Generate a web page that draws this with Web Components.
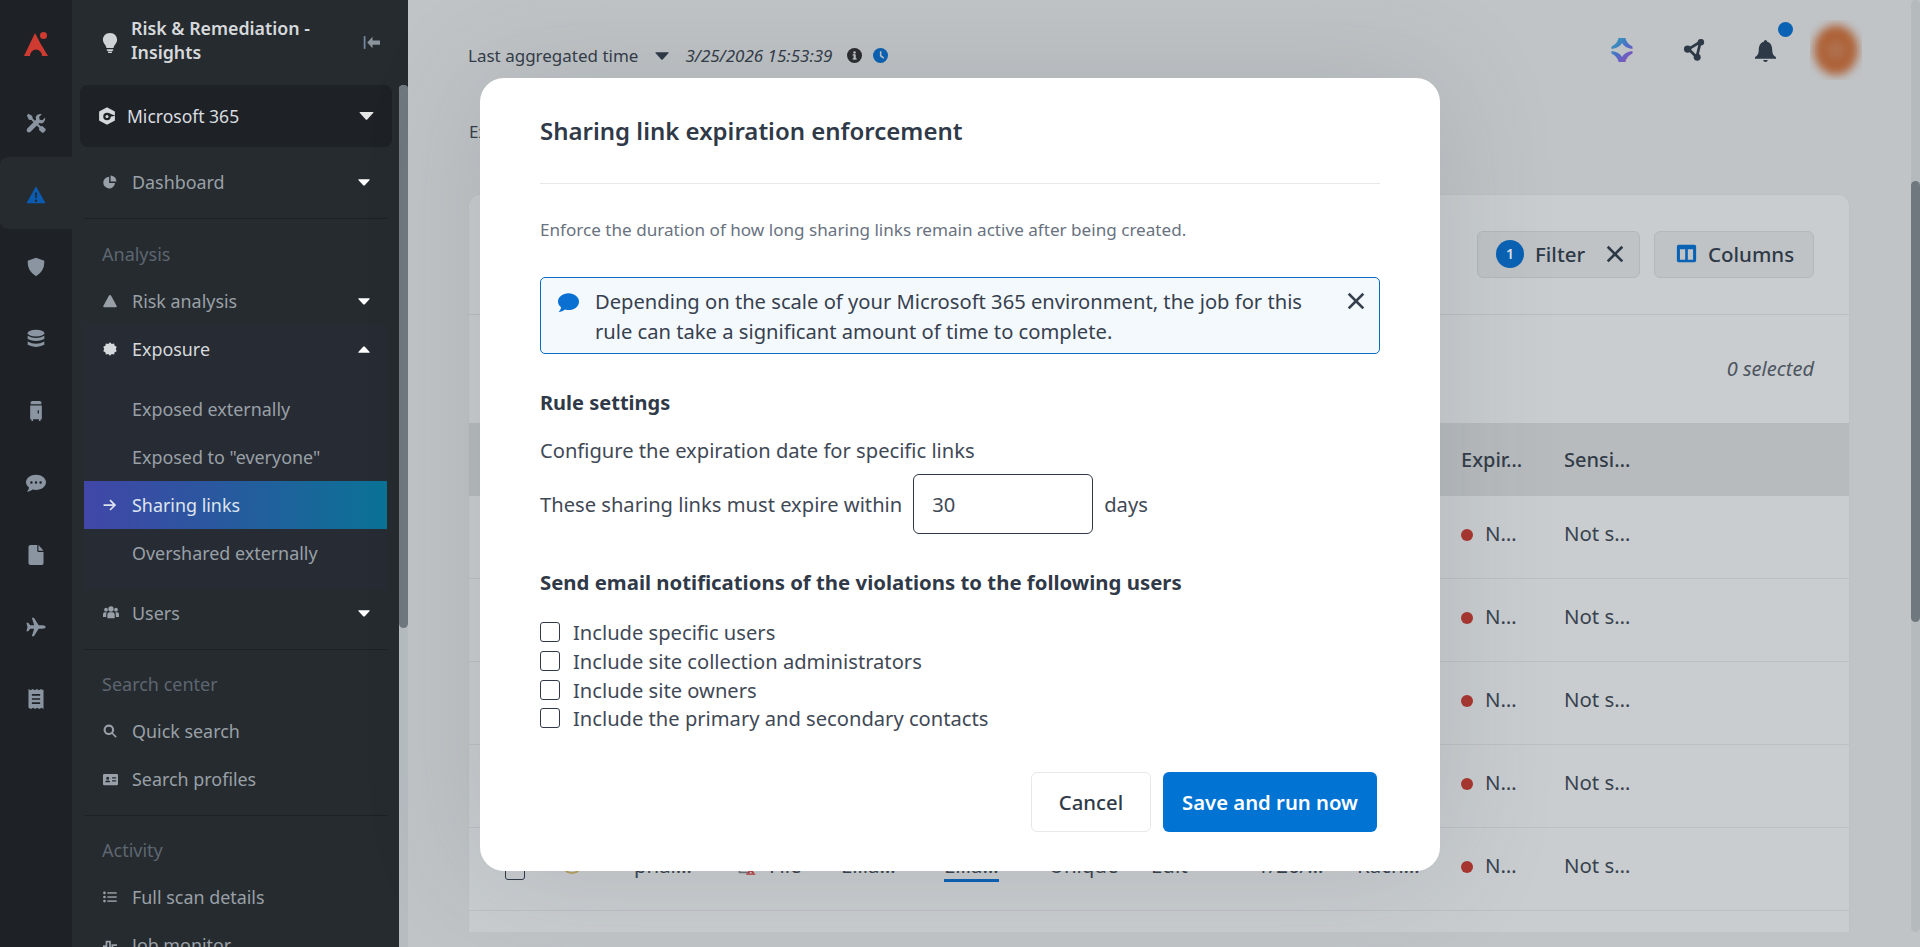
<!DOCTYPE html>
<html>
<head>
<meta charset="utf-8">
<title>Sharing links</title>
<style>
  html, body { margin: 0; height: 947px; overflow: hidden; background: #c0c4c7; }
  body { font-family: "Noto Sans", sans-serif; }
</style>
</head>
<body>
<risk-app></risk-app>

<script>
"use strict";

const ICONS = {
  logo: '<path fill="#cf3a31" d="M11 1 L16.500 11.500 L24 24 H18 A6 6.500 0 0 0 6 24 H0 Z"/><circle cx="19.500" cy="3.500" r="3.500" fill="#cf3a31"/>',
  tools: '<path d="M3 1 L1 3 L3.500 8 L6.500 8.500 L16 18 L15.500 20 L19 23.500 Q20.500 24 21.500 23 L23.500 21 Q24 20 23.300 19 L19.500 15.500 L17.500 16 L8 6.500 L7.500 3.500 Z"/><path d="M23 5.500 L19.700 8.800 L16.500 8 L15.700 4.800 L19 1.500 Q15 .3 12.700 3 Q11 5 12 8 L1.500 18.500 Q0 20.500 1.500 22.500 Q3.500 24 5.500 22.500 L16 12 Q19 13 21 11.300 Q23.700 9 23 5.500 Z"/>',
  warning: '<path fill-rule="evenodd" d="M12 1.500 L23.500 22 H.5 Z M10.800 9 L11.200 16 H12.800 L13.200 9 Z M12 17.300 A1.500 1.500 0 1 0 12 20.300 A1.500 1.500 0 1 0 12 17.300 Z"/>',
  shield: '<path d="M12 1 L22 4.500 Q22.500 17 12 23 Q1.500 17 2 4.500 Z"/>',
  db: '<ellipse cx="12" cy="5" rx="10" ry="4"/><path d="M2 8 Q12 13.500 22 8 V12 Q12 17 2 12 Z"/><path d="M2 15 Q12 20.500 22 15 V19 Q12 24 2 19 Z"/>',
  door: '<path d="M7.500 0 H16.500 Q18.500 0 18.500 2 V4 H5.500 V2 Q5.500 0 7.500 0 Z"/><path fill-rule="evenodd" d="M5 5.500 H19 V22 H17.500 V24 H15.500 V22 H8.500 V24 H6.500 V22 H5 Z M14 11 V15 H15.500 V11 Z"/>',
  chat: '<path fill-rule="evenodd" d="M12 2 C18.600 2 24 6 24 11.200 C24 16.400 18.600 20.400 12 20.400 C10.500 20.400 9 20.200 7.700 19.800 C6 21.300 3.500 22.500 1 22.500 C2.500 21 3.500 19 3.600 17.400 C1.400 15.800 0 13.700 0 11.200 C0 6 5.400 2 12 2 Z M6.500 9.800 A1.500 1.500 0 1 0 6.500 12.800 A1.500 1.500 0 1 0 6.500 9.800 Z M12 9.800 A1.500 1.500 0 1 0 12 12.800 A1.500 1.500 0 1 0 12 9.800 Z M17.500 9.800 A1.500 1.500 0 1 0 17.500 12.800 A1.500 1.500 0 1 0 17.500 9.800 Z"/>',
  file: '<path d="M5.500 0 H13.500 V7 Q13.500 8.500 15 8.500 H21 V22 Q21 24 19 24 H5.500 Q3 24 3 22 V2 Q3 0 5.500 0 Z"/><path d="M15 0 L21 6.800 H15 Z"/>',
  plane: '<path d="M23.500 12 Q23.500 10 19.500 10 H15.200 L9.500 1 H7 L9.800 10 H5 L2.700 7 H.5 L1.800 12 L.5 17 H2.700 L5 14 H9.800 L7 23 H9.500 L15.200 14 H19.500 Q23.500 14 23.500 12 Z"/>',
  receipt: '<path fill-rule="evenodd" d="M3 0 L5.500 1.500 L8 0 L10.500 1.500 L13 0 L15.500 1.500 L18 0 L20.500 1.500 L21 0 V24 L18.500 22.500 L16 24 L13.500 22.500 L11 24 L8.500 22.500 L6 24 L3 22.500 Z M7 6 V8 H17 V6 Z M7 11 V13 H17 V11 Z M7 16 V18 H17 V16 Z"/>',
  bulb: '<path d="M12 0 C6.500 0 3.500 4 3.500 8.200 C3.500 12.500 7 14 7.800 18 H16.200 C17 14 20.500 12.500 20.500 8.200 C20.500 4 17.500 0 12 0 Z"/><rect x="8" y="19.500" width="8" height="2" rx="1"/><rect x="9.500" y="22.300" width="5" height="1.700" rx=".8"/>',
  collapse: '<rect x="1" y="3" width="2.500" height="18" fill="#7587a0"/><path fill="#8b949c" d="M6 12 L13.500 4 V9 H24 V15 H13.500 V20 Z"/>',
  hex: '<path stroke="currentColor" stroke-width="2" stroke-linejoin="round" d="M12 1.500 L21.500 6.500 V17.500 L12 22.500 L2.500 17.500 V6.500 Z"/><circle cx="12" cy="12.500" r="5" fill="#1e2226"/><circle cx="12" cy="12.500" r="2" fill="currentColor"/><path d="M14 8 L23 11.500 L16.500 13 Z" fill="#1e2226"/>',
  pie: '<path d="M10.500 3 A10 10 0 1 0 20.500 13.500 H10.500 Z"/><path d="M13 1 A10 10 0 0 1 23 11 H13 Z"/>',
  tri: '<path d="M12 1.500 Q13 1.500 14 3 L23.500 20.500 Q24 22.500 22 22.500 H2 Q0 22.500 .5 20.500 L10 3 Q11 1.500 12 1.500 Z"/>',
  burst: '<path d="M12 .5 L15 3.500 L19 2.500 L20 6.500 L23.500 8 L22 12 L23.500 16 L20 17.500 L19 21.500 L15 20.500 L12 23.500 L9 20.500 L5 21.500 L4 17.500 L.5 16 L2 12 L.5 8 L4 6.500 L5 2.500 L9 3.500 Z"/>',
  arrow: '<path d="M1 10.500 H17 L11 4.500 L13 2.500 L22.500 12 L13 21.500 L11 19.500 L17 13.500 H1 Z"/>',
  users: '<circle cx="12" cy="6" r="4"/><circle cx="4.500" cy="7" r="2.800"/><circle cx="19.500" cy="7" r="2.800"/><path d="M6.500 20 V15 Q6.500 11 10 11 H14 Q17.500 11 17.500 15 V20 Z"/><path d="M0 18 V14 Q0 11 3 11 H5.500 Q4.800 12.500 4.800 15 V18 Z"/><path d="M24 18 V14 Q24 11 21 11 H18.500 Q19.200 12.500 19.200 15 V18 Z"/>',
  search: '<path fill-rule="evenodd" d="M10 1 A9 9 0 0 1 17.200 15.400 L23.500 21.600 L21.500 23.600 L15.300 17.300 A9 9 0 1 1 10 1 Z M10 4.500 A5.500 5.500 0 1 0 10 15.500 A5.500 5.500 0 1 0 10 4.500 Z"/>',
  idcard: '<path fill-rule="evenodd" d="M2 3 H22 Q24 3 24 5 V19 Q24 21 22 21 H2 Q0 21 0 19 V5 Q0 3 2 3 Z M7.500 7.500 A2.500 2.500 0 1 0 7.500 12.500 A2.500 2.500 0 1 0 7.500 7.500 Z M3.500 16.500 H11.500 Q11.500 13.500 9 13.500 H6 Q3.500 13.500 3.500 16.500 Z M14.500 8.500 V10.500 H21 V8.500 Z M14.500 13 V15 H21 V13 Z"/>',
  list: '<circle cx="2.500" cy="5" r="2.300"/><circle cx="2.500" cy="12" r="2.300"/><circle cx="2.500" cy="19" r="2.300"/><rect x="7.500" y="3.800" width="16" height="2.500"/><rect x="7.500" y="10.800" width="16" height="2.500"/><rect x="7.500" y="17.800" width="16" height="2.500"/>',
  pulse: '<path d="M0 14 H6 V6 H12 V18 H16 V12 H24" fill="none" stroke="currentColor" stroke-width="3"/>',
  info: '<circle cx="12" cy="12" r="12"/><rect x="10.500" y="10.500" width="3.500" height="7.500" fill="#c0c4c7"/><rect x="9" y="16.500" width="6.500" height="2" fill="#c0c4c7"/><rect x="9" y="10" width="4" height="2" fill="#c0c4c7"/><circle cx="12" cy="7" r="2" fill="#c0c4c7"/>',
  clock: '<circle cx="12" cy="12" r="12"/><path d="M11 5 H13.500 V11.500 L18 15 L16.500 17 L11 13 Z" fill="#c0c4c7"/>',
  net: '<path d="M6 11 L19 3 L15 20 Z" fill="none" stroke="currentColor" stroke-width="3"/><circle cx="5" cy="11" r="4"/><circle cx="19.500" cy="3.500" r="3.500"/><circle cx="15.500" cy="20" r="3.800"/>',
  bell: '<path d="M12 1 Q13.500 1 13.800 2.800 C18 4 19 8 19 11 C19 15.500 20.500 17.500 23 19 V20.500 H1 V19 C3.500 17.500 5 15.500 5 11 C5 8 6 4 10.200 2.800 Q10.500 1 12 1 Z"/><path d="M9.500 22 H14.500 Q14 24 12 24 Q10 24 9.500 22 Z"/>',
  spark: '<defs><linearGradient id="sg" gradientUnits="userSpaceOnUse" x1="0" y1="0" x2="24" y2="24"><stop offset="0" stop-color="#2aa8b4"/><stop offset=".5" stop-color="#4a6fc8"/><stop offset="1" stop-color="#a244b4"/></linearGradient></defs><path fill="url(#sg)" d="M8.500 0 H15.500 Q16 5 22.500 8.500 V11 Q14.500 10 12 5 Q9.500 10 1.500 11 V8.500 Q8 5 8.500 0 Z"/><path fill="url(#sg)" d="M8.500 24 H15.500 Q16 19 22.500 15.500 V13 Q14.500 14 12 19 Q9.500 14 1.500 13 V15.500 Q8 19 8.500 24 Z"/>',
  columns: '<path fill-rule="evenodd" d="M3 2 H21 Q23 2 23 4 V20 Q23 22 21 22 H3 Q1 22 1 20 V4 Q1 2 3 2 Z M4.500 7 V19 H10.500 V7 Z M13.500 7 V19 H19.500 V7 Z"/>',
  close: '<path d="M3.500 1 L12 9.500 L20.500 1 L23 3.500 L14.500 12 L23 20.500 L20.500 23 L12 14.500 L3.500 23 L1 20.500 L9.500 12 L1 3.500 Z"/>',
  bubble: '<path d="M12 1.500 C18.600 1.500 24 5.700 24 11 C24 16.300 18.600 20.500 12 20.500 C10.500 20.500 9.200 20.300 7.900 19.900 C6 21.500 3.500 22.800 .7 22.800 C2.500 21 3.300 19 3.500 17.300 C1.300 15.600 0 13.400 0 11 C0 5.700 5.400 1.500 12 1.500 Z"/>',
  medal: '<circle cx="12" cy="12" r="10" fill="none" stroke="currentColor" stroke-width="2"/><path d="M12 7 L15 15 L12 13 L9 15 Z"/>',
  xfile: '<path d="M3 1 V21 H13" fill="none" stroke="#6d7378" stroke-width="2"/><path d="M11 12 H22 M11 23 H22" stroke="#b5363a" stroke-width="1.500"/><path d="M13 14 L20 22 M20 14 L13 22" stroke="#b5363a" stroke-width="2"/>'
};

customElements.define("ui-icon", class extends HTMLElement {
  connectedCallback() {
    let size = this.getAttribute("size") || 16;
    let shadowRoot = this.attachShadow({mode: 'open'});
    shadowRoot.innerHTML = `
      <style>
        :host { display: inline-flex; flex: none; width: ${size}px; height: ${size}px; }
        svg { width: 100%; height: 100%; fill: currentColor; display: block; }
      </style>
      <svg viewBox="0 0 24 24">${ICONS[this.getAttribute("name")] || ""}</svg>
    `;
  }
});

const caret = (w, color) => `<svg width="${w}" height="${Math.round(w * .55)}" viewBox="0 0 10 5.500" style="display:block"><path fill="${color}" d="M.6 0 H9.400 Q10 0 9.700 .6 L5.500 5.200 Q5 5.500 4.500 5.200 L.3 .6 Q0 0 .6 0 Z"/></svg>`;

customElements.define("side-rail", class extends HTMLElement {
  constructor() {
    super();
    let names = ["tools", "warning", "shield", "db", "door", "chat", "file", "plane", "receipt"];
    let shadowRoot = this.attachShadow({mode: 'open'});
    shadowRoot.innerHTML = `
      <style>
        :host { display: flex; flex-direction: column; flex: none; width: 72px; height: 947px; background: #1e2226; color: #8a95a1; }
        .logo { height: 87px; display: flex; align-items: center; justify-content: center; }
        .it { height: 72px; display: flex; align-items: center; justify-content: center; flex: none; box-sizing: border-box; }
        .tools { height: 70px; padding-top: 2px; }
        .on { background: #262b2f; color: #0b5cb0; border-radius: 8px 0 0 8px; padding-top: 4px; }
        .on + .it { margin-top: 2px; }
      </style>
      <div class="logo"><ui-icon name="logo" size="24"></ui-icon></div>
      ${names.map((n) => `<div class="it ${n === "warning" ? "on" : ""} ${n === "tools" ? "tools" : ""}"><ui-icon name="${n}" size="20"></ui-icon></div>`).join("")}
    `;
  }
});

customElements.define("nav-item", class extends HTMLElement {
  connectedCallback() {
    let icon = this.getAttribute("icon");
    let drop = this.getAttribute("drop");
    let dropSvg = "";
    if (drop) {
      dropSvg = `<span class="drop ${drop}">${caret(12, "#ffffff")}</span>`;
    }
    let shadowRoot = this.attachShadow({mode: 'open'});
    shadowRoot.innerHTML = `
      <style>
        :host { display: flex; align-items: center; height: 48px; padding: 0 17px 0 19px; color: #99a0a7; font-size: 17.9px; }
        :host([bright]) { color: #d6d9dc; }
        :host([active]) { color: #dfe5ee; background: linear-gradient(90deg, #4147a8 0%, #2e54a0 35%, #0a7396 100%); }
        .ic { width: 29px; flex: none; display: flex; align-items: center; }
        span.t { flex: 1; white-space: nowrap; }
        .drop { display: block; }
        .up { transform: rotate(180deg); }
        :host([plain]) .ic { visibility: hidden; }
      </style>
      <div class="ic">${icon ? `<ui-icon name="${icon}" size="${this.getAttribute("isize") || 14}"></ui-icon>` : ""}</div>
      <span class="t"><slot></slot></span>
      ${dropSvg}
    `;
  }
});

customElements.define("side-nav", class extends HTMLElement {
  constructor() {
    super();
    let shadowRoot = this.attachShadow({mode: 'open'});
    shadowRoot.innerHTML = `
      <style>
        :host { display: block; flex: none; width: 336px; height: 947px; background: #262b2f; position: relative; overflow: hidden; font-family: "Noto Sans", sans-serif; }
        .head { height: 85px; display: flex; align-items: center; padding: 0 20px 0 28px; box-sizing: border-box; width: 328px; color: #d6d9dc; font-weight: 600; font-size: 17.8px; line-height: 24px; }
        .head .bulb { margin-right: 11px; margin-top: 1px; color: #d0d3d6; }
        .head .tt { flex: 1; margin-top: -5px; }
        .ms { width: 312px; margin-left: 8px; height: 62px; background: #1e2226; border-radius: 8px; display: flex; align-items: center; padding: 0 18px; box-sizing: border-box; color: #dadde0; font-size: 17.5px; }
        .ms .l { margin-right: 11px; color: #d6d9dc; }
        .ms span { flex: 1; }
        .list { width: 303px; margin-left: 12px; }
        .dash { margin-top: 11px; }
        hr { border: 0; height: 1px; background: #1d2124; margin: 0; }
        h4 { margin: 0; padding: 11px 0 0 18px; box-sizing: border-box; color: #5d6671; font-size: 18px; font-weight: 400; line-height: 47px; height: 57px; }
        .grp { background: #272b33; padding-bottom: 12px; }
        .gap { height: 12px; }
        .sec { height: 12px; }
        .first { height: 58px; padding-top: 12px; }
        .bar { position: absolute; right: 0; top: 85px; bottom: 0; width: 9px; background: #b6bcc0; border-radius: 5px 5px 0 0; }
        .thumb { position: absolute; right: 0; top: 85px; width: 9px; height: 543px; background: #6f787e; border-radius: 5px; }
      </style>
      <div class="head">
        <ui-icon class="bulb" name="bulb" size="20"></ui-icon>
        <div class="tt">Risk &amp; Remediation -<br>Insights</div>
        <ui-icon name="collapse" size="17"></ui-icon>
      </div>
      <div class="ms">
        <ui-icon class="l" name="hex" size="18"></ui-icon>
        <span>Microsoft 365</span>
        ${caret(15, "#e4e6e8")}
      </div>
      <div class="list">
        <nav-item class="dash" icon="pie" drop="down">Dashboard</nav-item>
        <div class="sec"></div>
        <hr>
        <h4 class="first">Analysis</h4>
        <nav-item icon="tri" drop="down">Risk analysis</nav-item>
        <div class="grp">
          <nav-item icon="burst" drop="up" bright>Exposure</nav-item>
          <div class="gap"></div>
          <nav-item plain>Exposed externally</nav-item>
          <nav-item plain>Exposed to "everyone"</nav-item>
          <nav-item icon="arrow" active>Sharing links</nav-item>
          <nav-item plain>Overshared externally</nav-item>
        </div>
        <nav-item icon="users" isize="16" drop="down">Users</nav-item>
        <div class="sec"></div>
        <hr>
        <h4>Search center</h4>
        <nav-item icon="search">Quick search</nav-item>
        <nav-item icon="idcard" isize="15">Search profiles</nav-item>
        <div class="sec"></div>
        <hr>
        <h4>Activity</h4>
        <nav-item icon="list">Full scan details</nav-item>
        <nav-item icon="pulse">Job monitor</nav-item>
      </div>
      <div class="bar"></div>
      <div class="thumb"></div>
    `;
  }
});

customElements.define("top-bar", class extends HTMLElement {
  constructor() {
    super();
    let shadowRoot = this.attachShadow({mode: 'open'});
    shadowRoot.innerHTML = `
      <style>
        :host { display: flex; align-items: center; height: 104px; color: #343c47; font-size: 17px; padding: 7px 58px 0 60px; box-sizing: border-box; position: relative; }
        .lbl { margin-right: 17px; white-space: nowrap; }
        .date { font-style: italic; margin: 0 15px 0 16px; white-space: nowrap; }
        .sp { flex: 1; }
        .tools { display: flex; align-items: center; color: #2e3947; margin-top: -11px; }
        .dot { position: absolute; left: 1370px; top: 22px; width: 15px; height: 15px; background: #0a62b4; border-radius: 50%; }
        .net { margin-left: 49px; }
        .bell { margin-left: 49px; }
        .clip { width: 52px; height: 60px; overflow: hidden; margin-left: 33px; display: flex; align-items: center; justify-content: center; }
        .ava { width: 44px; height: 50px; border-radius: 50%; background: radial-gradient(circle, #b07a5c 0%, #ad5f33 45%, #ad5f33 100%); filter: blur(5px); }
        .i2 { margin-left: 11px; color: #0a62b4; }
        .i1 { color: #2a2c2f; }
      </style>
      <span class="lbl">Last aggregated time</span>
      ${caret(14, "#2e3947")}
      <span class="date">3/25/2026 15:53:39</span>
      <ui-icon class="i1" name="info" size="15"></ui-icon>
      <ui-icon class="i2" name="clock" size="15"></ui-icon>
      <span class="sp"></span>
      <div class="tools">
        <ui-icon name="spark" size="24"></ui-icon>
        <ui-icon class="net" name="net" size="22"></ui-icon>
        <ui-icon class="bell" name="bell" size="23"></ui-icon>
        <div class="clip"><div class="ava"></div></div>
      </div>
      <div class="dot"></div>
    `;
  }
});

customElements.define("tool-button", class extends HTMLElement {
  constructor() {
    super();
    let shadowRoot = this.attachShadow({mode: 'open'});
    shadowRoot.innerHTML = `
      <style>
        :host { display: flex; align-items: center; height: 47px; border: 1px solid #b4b8bc; border-radius: 6px; background: #bfc3c6; box-sizing: border-box; color: #2e3947; font-size: 20.5px; font-weight: 500; gap: 11px; padding: 0 0 2px 18px; }
      </style>
      <slot></slot>
    `;
  }
});

const COLS = "80px 85px 103px 104px 103px 105px 102px 106px 100px 104px 103px 1fr";

customElements.define("data-row", class extends HTMLElement {
  constructor() {
    super();
    let shadowRoot = this.attachShadow({mode: 'open'});
    shadowRoot.innerHTML = `
      <style>
        :host { display: grid; grid-template-columns: ${COLS}; height: 83px; box-sizing: border-box; border-bottom: 1px solid #bcc0c4; align-items: center; color: #38424e; font-size: 20.4px; padding-bottom: 9px; }
        .chk { width: 18px; height: 20px; margin-left: 36px; margin-top: 9px; border: 1.5px solid #2f3947; border-radius: 3px; }
        .md { margin-left: 12px; color: #b8a05a; margin-top: 5px; }
        .dot { display: inline-block; width: 12px; height: 12px; background: #a9362f; border-radius: 50%; margin-right: 12px; }
        .f { display: flex; align-items: center; gap: 12px; }
        a { color: #38424e; border-bottom: 3px solid #0a62b4; }
      </style>
      <div><div class="chk"></div></div>
      <div><ui-icon class="md" name="medal" size="22"></ui-icon></div>
      <div>phar…</div>
      <div class="f"><ui-icon name="xfile" size="20"></ui-icon>File</div>
      <div>Ellia…</div>
      <div><a>Ellia…</a></div>
      <div>Unique</div>
      <div>Edit</div>
      <div>1/26/…</div>
      <div>Rach…</div>
      <div><span class="dot"></span>N…</div>
      <div>Not s…</div>
    `;
  }
});

customElements.define("data-card", class extends HTMLElement {
  constructor() {
    super();
    let shadowRoot = this.attachShadow({mode: 'open'});
    shadowRoot.innerHTML = `
      <style>
        :host { display: block; width: 1382px; height: 738px; margin-left: 60px; background: #c9cdd0; border: 1px solid #bdc1c4; border-bottom: 0; border-radius: 12px 12px 0 0; box-sizing: border-box; overflow: hidden; }
        .act { height: 120px; display: flex; justify-content: flex-end; align-items: center; gap: 14px; padding-right: 35px; box-sizing: border-box; border-bottom: 1px solid #b9bdc1; }
        .filter { width: 163px; }
        .cols { width: 160px; padding-left: 21px; }
        .badge { width: 28px; height: 28px; border-radius: 50%; background: #0a62b4; color: #dce3ea; font-size: 14px; display: flex; align-items: center; justify-content: center; font-weight: 600; }
        .sel { height: 108px; display: flex; justify-content: flex-end; align-items: center; padding: 0 35px 1px 0; color: #4d5560; font-style: italic; font-size: 20px; box-sizing: border-box; }
        .hd { display: grid; grid-template-columns: ${COLS}; height: 73px; align-items: center; background: #b7bbbe; color: #323c48; font-size: 20px; font-weight: 500; }
        .blue { color: #0a62b4; }
      </style>
      <div class="act">
        <tool-button class="filter"><span class="badge">1</span>Filter<ui-icon name="close" size="18" style="margin-left:10px"></ui-icon></tool-button>
        <tool-button class="cols"><ui-icon class="blue" name="columns" size="21"></ui-icon>Columns</tool-button>
      </div>
      <div class="sel">0 selected</div>
      <div class="hd">
        <div></div><div></div><div>Name</div><div>Type</div><div>Owner</div><div>Link</div><div>Scope</div><div>Role</div><div>Date</div><div>User</div><div>Expir…</div><div>Sensi…</div>
      </div>
      <data-row></data-row><data-row></data-row><data-row></data-row><data-row></data-row><data-row></data-row>
    `;
  }
});

customElements.define("main-view", class extends HTMLElement {
  constructor() {
    super();
    let shadowRoot = this.attachShadow({mode: 'open'});
    shadowRoot.innerHTML = `
      <style>
        :host { display: block; flex: 1; height: 947px; background: #c0c4c7; position: relative; overflow: hidden; font-family: "Noto Sans", sans-serif; }
        .note { height: 90px; padding: 16px 0 0 61px; box-sizing: border-box; color: #343c47; font-size: 17px; }
        .track { position: absolute; right: 0; top: 0; width: 9px; height: 932px; background: #b5babd; border-radius: 5px; }
        .thumb { position: absolute; right: 0; top: 181px; width: 9px; height: 441px; background: #6f787e; border-radius: 5px; }
      </style>
      <top-bar></top-bar>
      <div class="note">Expiration of sharing links</div>
      <data-card></data-card>
      <div class="track"></div>
      <div class="thumb"></div>
    `;
  }
});

customElements.define("check-line", class extends HTMLElement {
  constructor() {
    super();
    let shadowRoot = this.attachShadow({mode: 'open'});
    shadowRoot.innerHTML = `
      <style>
        :host { display: flex; align-items: center; height: 28.67px; gap: 13px; font-size: 20.15px; color: #3f4956; }
        i { width: 18px; height: 18px; border: 1.5px solid #2f3947; border-radius: 3px; flex: none; }
      </style>
      <i></i><slot></slot>
    `;
  }
});

customElements.define("share-modal", class extends HTMLElement {
  constructor() {
    super();
    let shadowRoot = this.attachShadow({mode: 'open'});
    shadowRoot.innerHTML = `
      <style>
        :host { position: absolute; left: 480px; top: 78px; width: 960px; height: 793px; background: #fff; border-radius: 24px; box-sizing: border-box; padding: 0 60px; font-family: "Noto Sans", sans-serif; color: #2f3947; box-shadow: 0 0 120px rgba(60,66,72,.16); display: flex; flex-direction: column; }
        .title { height: 106px; box-sizing: border-box; padding-top: 29px; border-bottom: 1px solid #e6e8ea; font-size: 24px; font-weight: 600; line-height: 48px; }
        .desc { margin-top: 34px; height: 24px; line-height: 24px; font-size: 17.13px; color: #697280; }
        .alert { margin-top: 35px; height: 77px; border: 1px solid #0a6cc4; border-radius: 5px; background: #f4f9fe; box-sizing: border-box; padding: 8px 17px; display: flex; font-size: 20.17px; line-height: 30px; color: #37414e; }
        .alert .b { color: #0a71d2; margin: 6px 16px 0 0; }
        .alert .x { flex: 1; white-space: nowrap; }
        .alert .c { margin: 6px -3px 0 0; }
        h3 { margin: 0; font-size: 20px; font-weight: 700; line-height: 28px; }
        .rule { margin-top: 35px; }
        .cfg { margin-top: 19px; font-size: 20.15px; line-height: 28px; color: #3f4956; }
        .row { margin-top: 10px; display: flex; align-items: center; font-size: 20.15px; color: #3f4956; }
        .inp { width: 180px; height: 60px; border: 1px solid #2f3947; border-radius: 6px; margin: 0 11px; box-sizing: border-box; display: flex; align-items: center; padding-left: 18px; }
        .send { margin-top: 33.5px; font-size: 20.35px; }
        .checks { margin-top: 22.5px; }
        .foot { margin-top: 39px; display: flex; justify-content: flex-end; gap: 12px; padding-right: 3px; }
        .btn { height: 60px; border-radius: 6px; box-sizing: border-box; display: flex; align-items: center; justify-content: center; font-size: 20.3px; font-weight: 600; }
        .cancel { width: 120px; border: 1px solid #e6e8ea; font-weight: 500; }
        .save { width: 214px; background: #0073d3; color: #fff; }
      </style>
      <div class="title">Sharing link expiration enforcement</div>
      <div class="desc">Enforce the duration of how long sharing links remain active after being created.</div>
      <div class="alert">
        <ui-icon class="b" name="bubble" size="21"></ui-icon>
        <div class="x">Depending on the scale of your Microsoft 365 environment, the job for this<br>rule can take a significant amount of time to complete.</div>
        <ui-icon class="c" name="close" size="18"></ui-icon>
      </div>
      <h3 class="rule">Rule settings</h3>
      <div class="cfg">Configure the expiration date for specific links</div>
      <div class="row">These sharing links must expire within <div class="inp">30</div> days</div>
      <h3 class="send">Send email notifications of the violations to the following users</h3>
      <div class="checks">
        <check-line>Include specific users</check-line>
        <check-line>Include site collection administrators</check-line>
        <check-line>Include site owners</check-line>
        <check-line>Include the primary and secondary contacts</check-line>
      </div>
      <div class="foot">
        <div class="btn cancel">Cancel</div>
        <div class="btn save">Save and run now</div>
      </div>
    `;
  }
});

customElements.define("risk-app", class extends HTMLElement {
  constructor() {
    super();
    let shadowRoot = this.attachShadow({mode: 'open'});
    shadowRoot.innerHTML = `
      <style>
        :host { display: flex; width: 1920px; height: 947px; position: relative; overflow: hidden; }
      </style>
      <side-rail></side-rail>
      <side-nav></side-nav>
      <main-view></main-view>
      <share-modal></share-modal>
    `;
  }
});
</script>
</body>
</html>
